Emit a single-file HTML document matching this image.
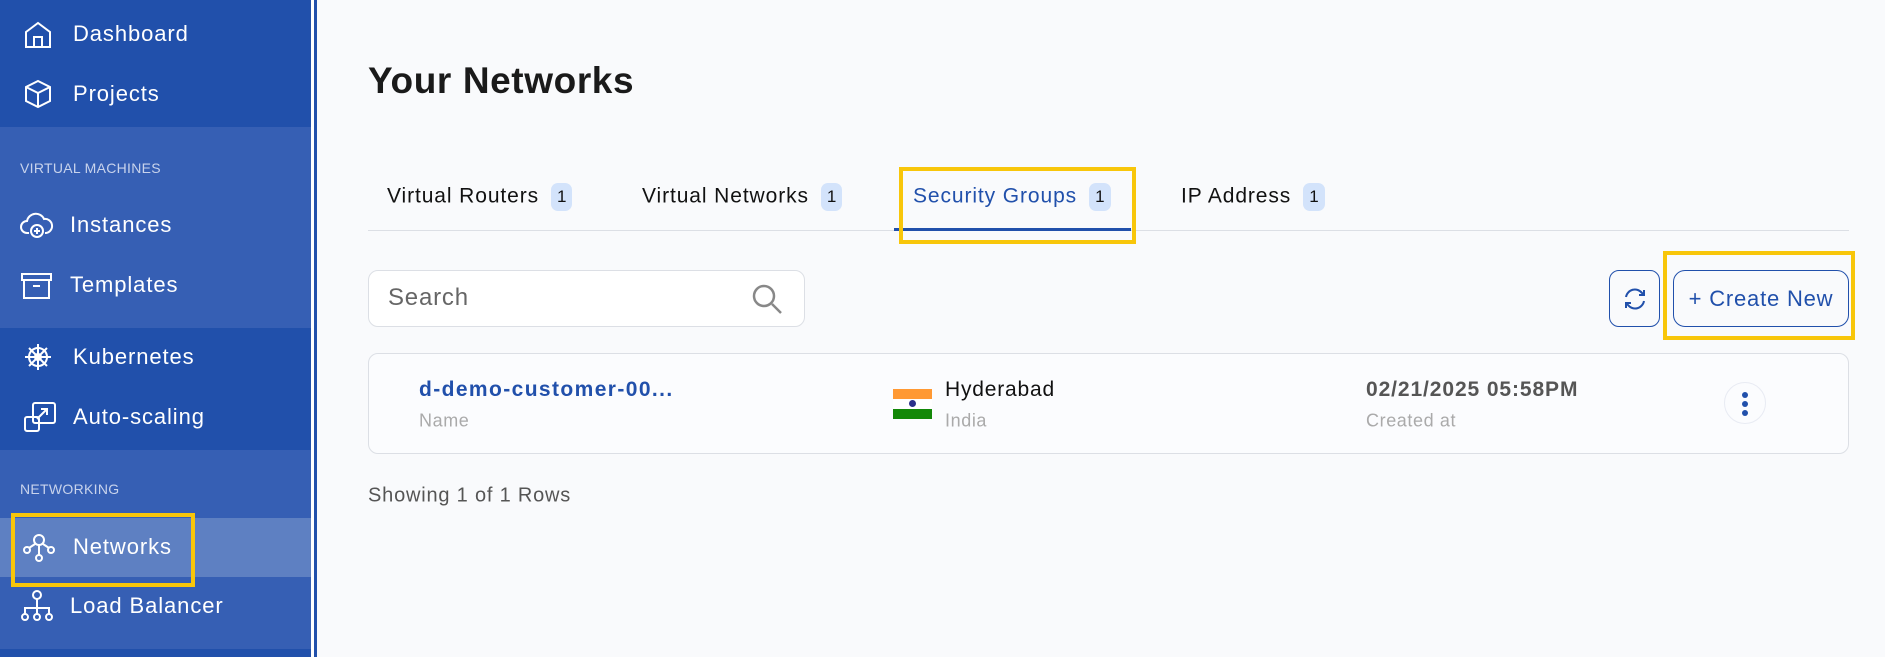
<!DOCTYPE html>
<html><head><meta charset="utf-8"><style>
*{margin:0;padding:0;box-sizing:border-box}
body{width:1885px;height:657px;overflow:hidden;background:#f9fafc;font-family:"Liberation Sans",sans-serif;position:relative}
.a{position:absolute}
.sb{left:0;top:0;width:311px;height:657px;background:#2150ab}
.band{left:0;width:311px;background:#365fb4}
.nav{color:#fff;font-size:22px;letter-spacing:0.9px;left:73px;transform:translateY(-50%);white-space:nowrap}
.lbl{color:#c8d3ec;font-size:14px;letter-spacing:0.3px;left:20px;transform:translateY(-50%)}
.ic{left:22px;transform:translateY(-50%)}
.tab{font-size:21px;letter-spacing:0.9px;color:#111;transform:translateY(-50%);white-space:nowrap}
.badge{display:inline-block;background:#d3e3fb;border-radius:7px;padding:4px 6px;font-size:17px;margin-left:12px;color:#111;letter-spacing:0;vertical-align:middle}
.yb{border:4px solid #f8c60a}
</style></head><body>
<div class="a sb"></div>
<div class="a band" style="top:127px;height:201px"></div>
<div class="a band" style="top:450px;height:199px"></div>
<div class="a" style="left:0;top:518px;width:311px;height:59px;background:#5e80c2"></div>
<div class="a" style="left:311px;top:0;width:3px;height:657px;background:#fff"></div>
<div class="a" style="left:314px;top:0;width:3px;height:657px;background:#2150ab"></div>

<svg class="a ic" style="top:35px" width="32" height="30" viewBox="0 0 32 30" fill="none" stroke="#fff" stroke-width="2"><path d="M4 12L16 3l12 9v15H4z"/><path d="M12 27V17h8v10"/></svg>
<div class="a nav" style="top:34px">Dashboard</div>
<svg class="a ic" style="top:94px" width="32" height="30" viewBox="0 0 32 30" fill="none" stroke="#fff" stroke-width="2"><path d="M16 2l12 6v14l-12 6-12-6V8z"/><path d="M4 8l12 6 12-6M16 14v14"/></svg>
<div class="a nav" style="top:94px">Projects</div>
<div class="a lbl" style="top:168px">VIRTUAL MACHINES</div>
<svg class="a" style="left:20px;top:211px" width="34" height="28" viewBox="0 0 34 28" fill="none" stroke="#fff" stroke-width="2"><path d="M9 22H7a6 6 0 010-12 9 9 0 0117-2 7 7 0 012 14h-1"/><circle cx="17" cy="20" r="6"/><path d="M17 17v6M14 20h6"/></svg>
<div class="a nav" style="top:225px;left:70px">Instances</div>
<svg class="a" style="left:21px;top:272px" width="32" height="28" viewBox="0 0 32 28" fill="none" stroke="#fff" stroke-width="2"><rect x="1" y="2" width="29" height="6"/><path d="M3 8v18h25V8M12 14h7"/></svg>
<div class="a nav" style="top:285px;left:70px">Templates</div>
<svg class="a" style="left:23px;top:342px" width="30" height="30" viewBox="0 0 30 30" fill="none" stroke="#fff" stroke-width="2"><circle cx="15" cy="15" r="9"/><circle cx="15" cy="15" r="3"/><path d="M15 2v26M2 15h26M6 6l18 18M24 6L6 24"/></svg>
<div class="a nav" style="top:357px">Kubernetes</div>
<svg class="a" style="left:23px;top:401px" width="34" height="32" viewBox="0 0 34 32" fill="none" stroke="#fff" stroke-width="2"><rect x="10" y="2" width="22" height="20" rx="2"/><rect x="2" y="16" width="14" height="14" rx="2"/><path d="M14 18l10-10M18 8h6v6"/></svg>
<div class="a nav" style="top:417px">Auto-scaling</div>
<div class="a lbl" style="top:489px">NETWORKING</div>
<svg class="a" style="left:23px;top:532px" width="32" height="30" viewBox="0 0 32 30" fill="none" stroke="#fff" stroke-width="2"><circle cx="16" cy="8" r="5"/><circle cx="4" cy="18" r="3"/><circle cx="28" cy="18" r="3"/><circle cx="16" cy="26" r="3"/><path d="M12 12l-6 4M20 12l6 4M16 13v10"/></svg>
<div class="a nav" style="top:547px">Networks</div>
<div class="a yb" style="left:11px;top:513px;width:184px;height:74px"></div>
<svg class="a" style="left:21px;top:590px" width="32" height="32" viewBox="0 0 32 32" fill="none" stroke="#fff" stroke-width="2"><circle cx="16" cy="5" r="4"/><circle cx="4" cy="27" r="3"/><circle cx="16" cy="27" r="3"/><circle cx="28" cy="27" r="3"/><path d="M16 9v15M4 24v-6h24v6"/></svg>
<div class="a nav" style="top:606px;left:70px">Load Balancer</div>

<div class="a" style="left:368px;top:81px;transform:translateY(-50%);font-size:37px;letter-spacing:0.6px;font-weight:bold;color:#1a1a1a">Your Networks</div>
<div class="a" style="left:368px;top:230px;width:1481px;height:1px;background:#dcdfe5"></div>
<div class="a tab" style="left:387px;top:197px">Virtual Routers<span class="badge">1</span></div>
<div class="a tab" style="left:642px;top:197px">Virtual Networks<span class="badge">1</span></div>
<div class="a tab" style="left:913px;top:197px;color:#2150ab">Security Groups<span class="badge">1</span></div>
<div class="a tab" style="left:1181px;top:197px">IP Address<span class="badge">1</span></div>
<div class="a" style="left:894px;top:228px;width:237px;height:3px;background:#2150ab"></div>
<div class="a yb" style="left:899px;top:167px;width:237px;height:77px"></div>

<div class="a" style="left:368px;top:270px;width:437px;height:57px;border:1px solid #dcdfe5;border-radius:10px;background:#fff"></div>
<div class="a" style="left:388px;top:298px;transform:translateY(-50%);font-size:24px;letter-spacing:0.8px;color:#666">Search</div>
<svg class="a" style="left:751px;top:283px" width="32" height="32" viewBox="0 0 32 32" fill="none" stroke="#888" stroke-width="2.5"><circle cx="13" cy="13" r="10"/><path d="M21 21l9 9"/></svg>

<div class="a" style="left:1609px;top:270px;width:51px;height:57px;border:1px solid #2150ab;border-radius:10px"></div>
<svg class="a" style="left:1622px;top:286px" width="26" height="26" viewBox="0 0 26 26" fill="none" stroke="#2150ab" stroke-width="2"><path d="M4 11a9 9 0 0116-4l2 2M22 15a9 9 0 01-16 4l-2-2"/><path d="M22 4v5h-5M4 22v-5h5"/></svg>
<div class="a" style="left:1673px;top:270px;width:176px;height:57px;border:1px solid #2150ab;border-radius:12px;color:#2150ab;font-size:22px;letter-spacing:0.8px;text-align:center;line-height:55px;white-space:nowrap">+ Create New</div>
<div class="a yb" style="left:1663px;top:251px;width:192px;height:89px"></div>

<div class="a" style="left:368px;top:353px;width:1481px;height:101px;border:1px solid #dcdfe5;border-radius:10px;background:#fbfcfe"></div>
<div class="a" style="left:419px;top:390px;transform:translateY(-50%);font-size:21px;letter-spacing:1.4px;font-weight:bold;color:#2150ab;white-space:nowrap">d-demo-customer-00...</div>
<div class="a" style="left:419px;top:421px;transform:translateY(-50%);font-size:18px;letter-spacing:0.6px;color:#aaa">Name</div>
<div class="a" style="left:893px;top:389px;width:39px;height:10px;background:#ff9933"></div>
<div class="a" style="left:893px;top:399px;width:39px;height:10px;background:#fff"></div>
<div class="a" style="left:909px;top:400px;width:7px;height:7px;border-radius:50%;background:#2b2f8a"></div>
<div class="a" style="left:893px;top:409px;width:39px;height:10px;background:#138808"></div>
<div class="a" style="left:945px;top:390px;transform:translateY(-50%);font-size:21px;letter-spacing:0.8px;color:#111">Hyderabad</div>
<div class="a" style="left:945px;top:421px;transform:translateY(-50%);font-size:18px;letter-spacing:0.6px;color:#aaa">India</div>
<div class="a" style="left:1366px;top:390px;transform:translateY(-50%);font-size:21px;letter-spacing:0.9px;font-weight:bold;color:#555;white-space:nowrap">02/21/2025 05:58PM</div>
<div class="a" style="left:1366px;top:421px;transform:translateY(-50%);font-size:18px;letter-spacing:0.6px;color:#aaa">Created at</div>
<div class="a" style="left:1724px;top:382px;width:42px;height:42px;border:1px solid #e8ebf3;border-radius:50%"></div>
<div class="a" style="left:1742px;top:392px;width:6px;height:6px;border-radius:50%;background:#2150ab;box-shadow:0 9px 0 #2150ab,0 18px 0 #2150ab"></div>

<div class="a" style="left:368px;top:496px;transform:translateY(-50%);font-size:20px;letter-spacing:0.8px;color:#555">Showing 1 of 1 Rows</div>
</body></html>
